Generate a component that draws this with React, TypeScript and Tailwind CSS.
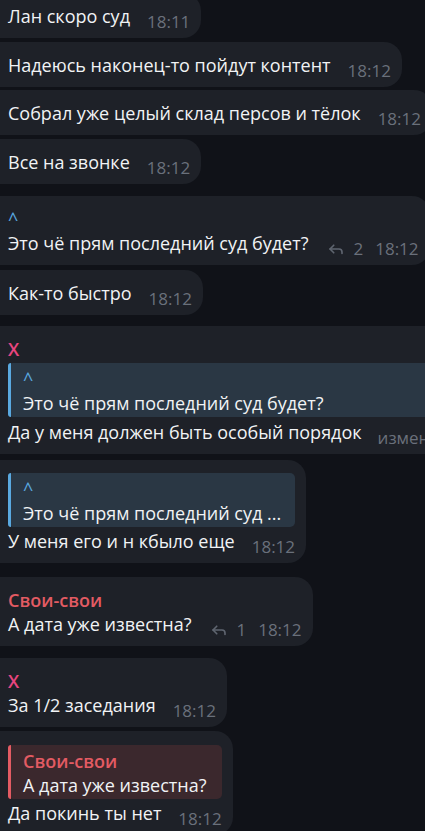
import React from "react";

const Time = ({ t }: { t: string }) => (
  <span className="ml-[17px] mt-[6px] shrink-0 text-[17px] leading-[24px] text-[#6a707b]">{t}</span>
);

const ReplyIcon = () => (
  <svg width="18" height="18" viewBox="0 0 24 24" fill="none" stroke="#5f6570" strokeWidth="2.2" strokeLinecap="round" strokeLinejoin="round">
    <path d="M20 18v-2a4 4 0 0 0-4-4H4" />
    <path d="m9 17-5-5 5-5" />
  </svg>
);

const Meta = ({ n, t }: { n: string; t: string }) => (
  <span className="ml-[19px] mt-[6px] flex shrink-0 items-center text-[17px] leading-[24px] text-[#6a707b]">
    <ReplyIcon />
    <span className="ml-[8px]">{n}</span>
    <span className="ml-[12px]">{t}</span>
  </span>
);

const Bubble = ({
  children,
  className = "",
}: {
  children: React.ReactNode;
  className?: string;
}) => (
  <div className={"flex " + className}>
    <div className="shrink-0 whitespace-nowrap rounded-r-[18px] bg-[#1e2128] pb-[4px] pl-[8px] pr-[11px]">
      {children}
    </div>
  </div>
);

const Row = ({ text, meta }: { text: string; meta: React.ReactNode }) => (
  <div className="flex items-start">
    <span className="leading-[24px]">{text}</span>
    {meta}
  </div>
);

const Quote = ({
  name,
  text,
  tone,
}: {
  name: string;
  text: string;
  tone: "blue" | "red";
}) => (
  <div
    className={
      "flex rounded-[5px] " +
      (tone === "blue" ? "bg-[#2a3744]" : "bg-[#3b282d]")
    }
  >
    <div
      className={
        "w-[3px] shrink-0 rounded-l-[5px] " +
        (tone === "blue" ? "bg-[#5aa9e0]" : "bg-[#e35b63]")
      }
    />
    <div className="pb-[2px] pl-[12px] pr-[12px] pt-[4px]">
      <div
        className={
          "leading-[24px] " +
          (tone === "blue" ? "text-[#5aa9e0]" : "font-semibold text-[#e35b63]")
        }
      >
        {name}
      </div>
      <div className="leading-[24px]">{text}</div>
    </div>
  </div>
);

export default function App() {
  return (
    <div
      className="h-[831px] w-[425px] overflow-hidden bg-[#101218] text-[18px] text-[#f1f3f5]"
      style={{ fontFamily: '"Open Sans", "Noto Sans", sans-serif' }}
    >
      <div className="-mt-[7px] flex flex-col">
        <Bubble>
          <div className="pt-[11px]">
            <Row text="Лан скоро суд" meta={<Time t="18:11" />} />
          </div>
        </Bubble>
        <Bubble className="mt-[4px]">
          <div className="pt-[11px]">
            <Row text="Надеюсь наконец-то пойдут контент" meta={<Time t="18:12" />} />
          </div>
        </Bubble>
        <Bubble className="mt-[3px]">
          <div className="pt-[11px]">
            <Row text="Собрал уже целый склад персов и тёлок" meta={<Time t="18:12" />} />
          </div>
        </Bubble>
        <Bubble className="mt-[4px]">
          <div className="pt-[11px]">
            <Row text="Все на звонке" meta={<Time t="18:12" />} />
          </div>
        </Bubble>

        <Bubble className="mt-[12px]">
          <div className="pt-[11px]">
            <div className="leading-[24px] text-[#5aa9e0]">^</div>
            <Row text="Это чё прям последний суд будет?" meta={<Meta n="2" t="18:12" />} />
          </div>
        </Bubble>
        <Bubble className="mt-[5px]">
          <div className="pt-[11px]">
            <Row text="Как-то быстро" meta={<Time t="18:12" />} />
          </div>
        </Bubble>

        <Bubble className="mt-[11px]">
          <div className="pt-[11px]">
            <div className="font-semibold leading-[24px] text-[#e8467f]">X</div>
            <div className="mt-[2px]">
              <Quote name="^" text="Это чё прям последний суд будет?" tone="blue" />
            </div>
            <div className="mt-[3px]">
              <Row
                text="Да у меня должен быть особый порядок"
                meta={<span className="ml-[16px] mt-[6px] shrink-0 text-[17px] leading-[24px] text-[#6a707b]">изменено 18:12</span>}
              />
            </div>
          </div>
        </Bubble>
        <Bubble className="mt-[6px]">
          <div className="pt-[13px]">
            <Quote name="^" text="Это чё прям последний суд ..." tone="blue" />
            <div className="mt-[2px]">
              <Row text="У меня его и н кбыло еще" meta={<Time t="18:12" />} />
            </div>
          </div>
        </Bubble>

        <Bubble className="mt-[14px]">
          <div className="pt-[11px]">
            <div className="font-semibold leading-[24px] text-[#e35b63]">Свои-свои</div>
            <Row text="А дата уже известна?" meta={<Meta n="1" t="18:12" />} />
          </div>
        </Bubble>

        <Bubble className="mt-[12px]">
          <div className="pt-[11px]">
            <div className="font-semibold leading-[24px] text-[#e8467f]">X</div>
            <Row text="За 1/2 заседания" meta={<Time t="18:12" />} />
          </div>
        </Bubble>
        <Bubble className="mt-[4px]">
          <div className="pt-[14px]">
            <Quote name="Свои-свои" text="А дата уже известна?" tone="red" />
            <div className="mt-[2px]">
              <Row text="Да покинь ты нет" meta={<Time t="18:12" />} />
            </div>
          </div>
        </Bubble>
      </div>
    </div>
  );
}
